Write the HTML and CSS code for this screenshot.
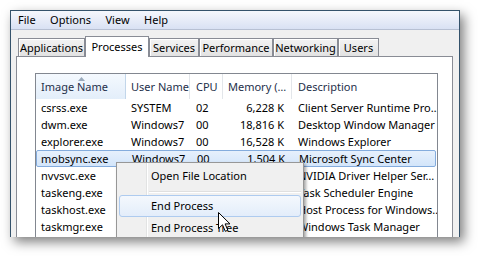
FILE: index.html
```html
<!DOCTYPE html>
<html lang="en">
<head>
    <meta charset="UTF-8">
    <title>Windows Task Manager</title>
    <link rel="stylesheet" href="styles.css">
</head>
<body>
    <div class="window">
        <div class="menubar">
            <span class="menu-item">File</span>
            <span class="menu-item">Options</span>
            <span class="menu-item">View</span>
            <span class="menu-item">Help</span>
        </div>
        <div class="content">
            <div class="tabs">
                <div class="tab w-apps">Applications</div>
                <div class="tab tab-active w-proc">Processes</div>
                <div class="tab w-serv">Services</div>
                <div class="tab w-perf">Performance</div>
                <div class="tab w-net">Networking</div>
                <div class="tab w-users">Users</div>
            </div>
            <div class="panel">
                <div class="listview">
                    <div class="row header">
                        <div class="cell sorted">Image Name
                            <svg class="sort-arrow" width="7" height="4" viewBox="0 0 7 4"><path d="M0 4 L3.5 0 L7 4 Z" fill="#9aaabb"/></svg>
                        </div>
                        <div class="cell">User Name</div>
                        <div class="cell">CPU</div>
                        <div class="cell">Memory (…</div>
                        <div class="cell">Description</div>
                    </div>
                    <div class="row">
                        <div class="cell">csrss.exe</div>
                        <div class="cell">SYSTEM</div>
                        <div class="cell cpu">02</div>
                        <div class="cell mem">6,228 K</div>
                        <div class="cell">Client Server Runtime Pro…</div>
                    </div>
                    <div class="row">
                        <div class="cell">dwm.exe</div>
                        <div class="cell">Windows7</div>
                        <div class="cell cpu">00</div>
                        <div class="cell mem">18,816 K</div>
                        <div class="cell">Desktop Window Manager</div>
                    </div>
                    <div class="row">
                        <div class="cell">explorer.exe</div>
                        <div class="cell">Windows7</div>
                        <div class="cell cpu">00</div>
                        <div class="cell mem">16,528 K</div>
                        <div class="cell">Windows Explorer</div>
                    </div>
                    <div class="row selected">
                        <div class="cell">mobsync.exe</div>
                        <div class="cell">Windows7</div>
                        <div class="cell cpu">00</div>
                        <div class="cell mem">1,504 K</div>
                        <div class="cell">Microsoft Sync Center</div>
                    </div>
                    <div class="row">
                        <div class="cell">nvvsvc.exe</div>
                        <div class="cell">SYSTEM</div>
                        <div class="cell cpu">00</div>
                        <div class="cell mem">1,880 K</div>
                        <div class="cell">NVIDIA Driver Helper Ser…</div>
                    </div>
                    <div class="row">
                        <div class="cell">taskeng.exe</div>
                        <div class="cell">Windows7</div>
                        <div class="cell cpu">00</div>
                        <div class="cell mem">1,612 K</div>
                        <div class="cell">Task Scheduler Engine</div>
                    </div>
                    <div class="row">
                        <div class="cell">taskhost.exe</div>
                        <div class="cell">Windows7</div>
                        <div class="cell cpu">00</div>
                        <div class="cell mem">3,300 K</div>
                        <div class="cell">Host Process for Windows…</div>
                    </div>
                    <div class="row">
                        <div class="cell">taskmgr.exe</div>
                        <div class="cell">Windows7</div>
                        <div class="cell cpu">01</div>
                        <div class="cell mem">2,148 K</div>
                        <div class="cell">Windows Task Manager</div>
                    </div>
                </div>
            </div>
        </div>

        <!-- menu contextual -->
        <div class="context-menu">
            <div class="ctx-item">Open File Location</div>
            <div class="ctx-sep"></div>
            <div class="ctx-item hover">End Process</div>
            <div class="ctx-item">End Process Tree</div>
        </div>

        <svg class="cursor" width="13" height="21" viewBox="0 0 13 21">
            <path d="M0.5 0.5 L0.5 16.5 L4.5 12.8 L7.3 19.3 L9.8 18.2 L7.1 11.9 L12 11.9 Z" fill="#fff" stroke="#000" stroke-width="1" stroke-linejoin="miter"/>
        </svg>
    </div>
</body>
</html>
```

FILE: styles.css
```css
body {
    margin: 0;
    background-color: #ffffff;
    font-family: "Noto Sans", "Open Sans", sans-serif;
    font-size: 11px;
    color: #000000;
    width: 478px;
    height: 256px;
    overflow: hidden;
}

.window {
    position: relative;
    margin: 10px 0 0 10px;
    width: 450px;
    height: 227px;
    box-sizing: border-box;
    border: 1px solid #34526b;
    border-bottom: none;
    background-color: #f0f0f0;
    overflow: hidden;
    box-shadow: 4px 5px 11px rgba(0, 0, 0, 0.5);
}

.menubar {
    display: flex;
    height: 18px;
    background: linear-gradient(#f5f7fc, #d9e1f3);
    border-bottom: 1px solid #b7c0d3;
    line-height: 18px;
}
.menu-item {
    padding: 0 7.5px 0 7px;
}

.content {
    padding: 6px 6px 0 5px;
}

.tabs {
    display: flex;
    align-items: flex-end;
    height: 20px;
    padding-left: 2px;
}
.tab {
    height: 18px;
    line-height: 18px;
    box-sizing: border-box;
    text-align: center;
    white-space: nowrap;
    border: 1px solid #898c95;
    border-bottom: none;
    background: linear-gradient(#f3f3f3, #e2e2e2);
    box-shadow: inset 1px 1px 0 #ffffff;
}
.tab-active {
    position: relative;
    z-index: 1;
    height: 21px;
    line-height: 19px;
    margin-bottom: -1px;
    background: #ffffff;
    box-shadow: none;
}
.w-apps { width: 67px; }
.w-proc { width: 64px; }
.w-serv { width: 50px; }
.w-perf { width: 74px; }
.w-net { width: 65px; }
.w-users { width: 41px; }

.panel {
    height: 200px;
    background-color: #ffffff;
    border: 1px solid #898c95;
    border-bottom: none;
    padding: 16px 14px 0 18px;
}

.listview {
    height: 200px;
    border: 1px solid #828790;
    border-bottom: none;
    background-color: #ffffff;
}

.row {
    display: grid;
    grid-template-columns: 90px 64px 33px 69px 145px;
    height: 17px;
    line-height: 17px;
    box-sizing: border-box;
}
.cell {
    padding-left: 5px;
    white-space: nowrap;
    overflow: hidden;
}
.row .cell:nth-child(3),
.row .cell:nth-child(5) {
    padding-left: 6px;
}
.cell.cpu {
    padding-left: 10px;
}
.cell.mem {
    padding-left: 0;
    padding-right: 8px;
    text-align: right;
}

.header {
    height: 25px;
    line-height: 26px;
    color: #1e2f4a;
}
.header .cell {
    position: relative;
    border-right: 1px solid #e3e6ea;
}
.header .cell:last-child {
    border-right: none;
}
.header .sorted {
    background: linear-gradient(#f4f9fe, #e3eefa);
    border-right: 1px solid #c2d6ea;
}
.sort-arrow {
    position: absolute;
    left: 42px;
    top: 3px;
}

.selected {
    margin: 0 1px 0 0;
    border: 1px solid #84acdd;
    border-radius: 2px;
    background: linear-gradient(#e6f0fc, #d3e5fa);
    line-height: 15px;
}
.selected .cell:first-child {
    padding-left: 4px;
}

.context-menu {
    position: absolute;
    left: 105px;
    top: 151px;
    width: 188px;
    box-sizing: border-box;
    padding: 2px;
    border: 1px solid #979797;
    background-color: #f0f0f0;
    background-image: linear-gradient(to right, transparent 29px, #e2e3e3 29px, #e2e3e3 30px, #ffffff 30px, #ffffff 31px, transparent 31px);
    box-shadow: 2px 2px 3px rgba(0, 0, 0, 0.35);
    z-index: 2;
}
.ctx-item {
    height: 22px;
    line-height: 22px;
    padding-left: 32px;
    box-sizing: border-box;
}
.ctx-item.hover {
    border: 1px solid #aecbef;
    border-radius: 3px;
    background: linear-gradient(#f4f8fd, #e3edfa);
    padding-left: 31px;
    line-height: 20px;
}
.ctx-sep {
    height: 8px;
    margin-left: 30px;
    background: linear-gradient(transparent 4px, #e0e0e0 4px, #e0e0e0 5px, #ffffff 5px, #ffffff 6px, transparent 6px);
}

.cursor {
    position: absolute;
    left: 207px;
    top: 201px;
    z-index: 3;
}
```
